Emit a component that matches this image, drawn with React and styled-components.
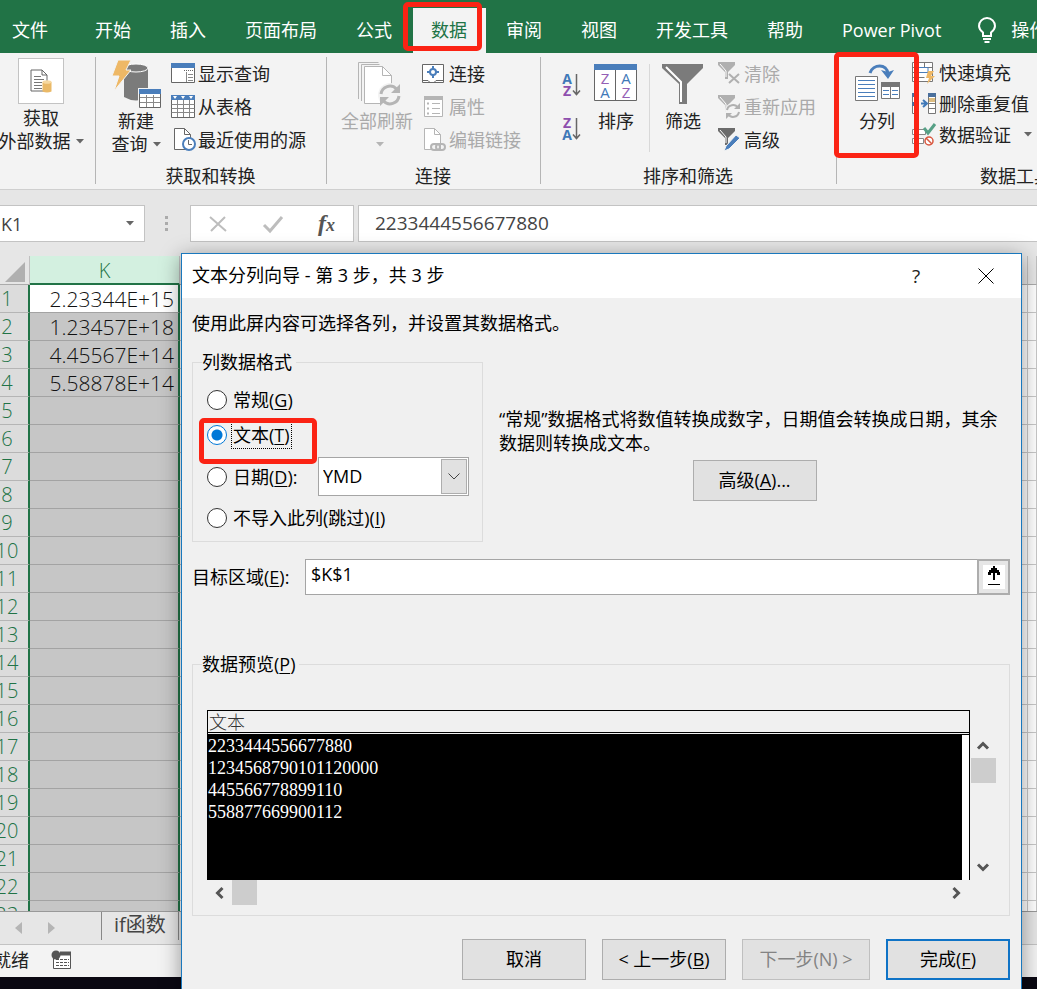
import { useState } from "react";
import styled, { createGlobalStyle } from "styled-components";

const tabs = ["开始", "插入", "页面布局", "公式", "数据", "审阅", "视图", "开发工具", "帮助", "Power Pivot"];

const cells = ["2.23344E+15", "1.23457E+18", "4.45567E+14", "5.58878E+14"];

const previewRows = [
  "2233444556677880",
  "1234568790101120000",
  "445566778899110",
  "558877669900112",
];

const rows = Array.from({ length: 23 }, (_, i) => i + 1);

export default function App() {
  return (
    <Window>
      <GlobalStyle />
      <TabBar />
      <Ribbon />
      <FormulaBar />
      <Sheet />
      <SheetTabs>
        <NavArrow viewBox="0 0 7 12">
          <path d="M7 0v12L0 6z" />
        </NavArrow>
        <NavArrow viewBox="0 0 7 12">
          <path d="M0 0v12l7-6z" />
        </NavArrow>
        <SheetTab>if函数</SheetTab>
      </SheetTabs>
      <StatusBar>
        <span>就绪</span>
        <svg width="21" height="20" viewBox="0 0 21 20">
          <path d="M2.500 7v11.500h17V2" fill="#fff" stroke="#555" />
          <path d="M9 1.500h11v4H9z" fill="#555" />
          <circle cx="5" cy="5" r="4.500" fill="#555" />
          <path d="M5 9.500h13M5 12.500h13M5 15.500h13" stroke="#555" strokeDasharray="3 1" />
        </svg>
      </StatusBar>
      <Taskbar />
      <Wizard />
    </Window>
  );
}

function TabBar() {
  return (
    <Tabs>
      <FileTab>文件</FileTab>
      {tabs.map((tab) => (
        <Tab key={tab} $active={tab === "数据"}>
          {tab}
          {tab === "数据" && <TabMark />}
        </Tab>
      ))}
      <TellMe>
        <svg width="20" height="26" viewBox="0 0 20 26" fill="none" stroke="#fff" strokeWidth="2">
          <path d="M6 19v-3.500C3.500 13.500 2 11.500 2 9a8 8 0 0 1 16 0c0 2.500-1.500 4.500-4 6.500V19z" />
          <path d="M6 22h8M7.500 25h5" />
        </svg>
        操作说明搜索
      </TellMe>
    </Tabs>
  );
}

function Ribbon() {
  return (
    <RibbonBar>
      <Group $width={96}>
        <GroupBody>
          <BigButton $width={82}>
            <Framed>
              <svg width="22" height="24" viewBox="0 0 22 24">
                <path d="M1 1h11l5 5v16H1z" fill="#fff" stroke="#666" />
                <path d="M12 1v5h5" fill="none" stroke="#666" />
                <path d="M4 7.500h7M4 10.500h10M4 13.500h8M4 16.500h8M4 19.500h8" stroke="#777" />
                <path d="M12.500 13h9v9.500q-4.500 2-9 0z" fill="#eab967" />
                <ellipse cx="17" cy="13" rx="4.500" ry="1.800" fill="#f6d8a0" />
              </svg>
            </Framed>
            <span>获取</span>
            <span>
              外部数据 <Caret />
            </span>
          </BigButton>
        </GroupBody>
        <GroupLabel />
      </Group>

      <Group $width={231}>
        <GroupBody $left={14}>
          <BigButton $width={52}>
            <NewQueryIcon />
            <span>新建</span>
            <span>
              查询 <Caret />
            </span>
          </BigButton>
          <SmallList $left={9}>
            <SmallButton>
              <svg viewBox="0 0 25 25">
                <path d="M.500 3.500h23v18H.500z" fill="#fff" stroke="#666" />
                <path d="M0 2h24v5H0z" fill="#4a7ebb" />
                <path d="M13 9.500h9" stroke="#666" strokeDasharray="1 1" />
                <path d="M15.500 11v10M17 13.500h5M17 16.500h5M17 19.500h5" stroke="#888" />
              </svg>
              显示查询
            </SmallButton>
            <SmallButton>
              <svg viewBox="0 0 25 25">
                <path d="M.500 2.500h23v21H.500z" fill="#fff" stroke="#666" />
                <path d="M.500 10.500h23M.500 14.500h23M.500 18.500h23M6.500 6v17M12.500 6v17M18.500 6v17" stroke="#888" />
                <path d="M0 1h24v5H0z" fill="#4a7ebb" />
                <path d="M2 2h4l-2 3zM10 2h4l-2 3zM18 2h4l-2 3z" fill="#fff" />
              </svg>
              从表格
            </SmallButton>
            <SmallButton>
              <svg viewBox="0 0 25 25">
                <path d="M3.500 1.500h10l6 6v15h-16z" fill="#fff" stroke="#666" />
                <path d="M13.500 1.500v6h6" fill="none" stroke="#666" />
                <circle cx="18" cy="17" r="6" fill="#fff" stroke="#4a7ebb" strokeWidth="2" />
                <path d="M17.500 13v4.500H21" fill="none" stroke="#666" />
              </svg>
              最近使用的源
            </SmallButton>
          </SmallList>
        </GroupBody>
        <GroupLabel>获取和转换</GroupLabel>
      </Group>

      <Group $width={214}>
        <GroupBody $left={13}>
          <BigButton $width={74} disabled>
            <svg width="44" height="46" viewBox="0 0 44 46" fill="none" stroke="#b5b5b5">
              <path d="M3.500 38V1.500h20M6.500 40V3.500h18" />
              <path d="M9.500 5.500h18l9 9v28h-27z" fill="#fff" />
              <path d="M27.500 5.500v9h9" />
              <circle cx="35" cy="34" r="12" fill="#f3f3f3" stroke="none" />
              <path d="M26 33a9 9 0 0 1 15.500-5M44 35a9 9 0 0 1-15.500 5" strokeWidth="3" />
              <path d="M45 23v9h-9zM25 45v-9h9z" fill="#b5b5b5" stroke="none" />
            </svg>
            <span>全部刷新</span>
            <span>
              <Caret />
            </span>
          </BigButton>
          <SmallList $left={8}>
            <SmallButton>
              <svg viewBox="0 0 25 25">
                <path d="M.500 3.500h21v18H.500z" fill="#fff" stroke="#666" />
                <path d="M1 19.500h5l2 2h4l2-2h7" fill="none" stroke="#666" />
                <circle cx="11" cy="11" r="3" fill="none" stroke="#4a7ebb" strokeWidth="2" />
                <path d="M11 5v3M11 14v3M5 11h3M14 11h3" stroke="#4a7ebb" strokeWidth="2" />
              </svg>
              连接
            </SmallButton>
            <SmallButton disabled>
              <svg viewBox="0 0 25 25">
                <path d="M2.500 2.500h18v20h-18z" fill="#fff" stroke="#b5b5b5" />
                <path d="M2 2h19v4H2z" fill="#b5b5b5" />
                <path d="M10 9.500h8M10 14.500h8M10 19.500h8" stroke="#b5b5b5" />
                <path d="M5 9.500h2M5 14.500h2M5 19.500h2" stroke="#b5b5b5" strokeWidth="2" />
              </svg>
              属性
            </SmallButton>
            <SmallButton disabled>
              <svg viewBox="0 0 25 25" fill="none" stroke="#b5b5b5">
                <path d="M2.500 1.500h10l6 6v15h-16z" fill="#fff" />
                <path d="M12.500 1.500v6h6" />
                <rect x="9" y="17" width="9" height="6" rx="3" fill="#f3f3f3" strokeWidth="2" />
                <rect x="14" y="17" width="9" height="6" rx="3" strokeWidth="2" />
              </svg>
              编辑链接
            </SmallButton>
          </SmallList>
        </GroupBody>
        <GroupLabel>连接</GroupLabel>
      </Group>

      <Group $width={296}>
        <GroupBody $left={20}>
          <SortColumn>
            <IconButton aria-label="升序">
              <SortIcon top="A" bottom="Z" />
            </IconButton>
            <IconButton aria-label="降序">
              <SortIcon top="Z" bottom="A" />
            </IconButton>
          </SortColumn>
          <BigButton $width={50}>
            <svg width="44" height="46" viewBox="0 0 44 46">
              <path d="M.500 4.500h42v35H.500z" fill="#fff" stroke="#666" />
              <path d="M21.500 7v32" stroke="#666" />
              <path d="M0 3h43v6H0z" fill="#4a7ebb" />
              <IconText x="11" y="23" fill="#9560b5">Z</IconText>
              <IconText x="11" y="37" fill="#3f78b8">A</IconText>
              <IconText x="32" y="23" fill="#3f78b8">A</IconText>
              <IconText x="32" y="37" fill="#9560b5">Z</IconText>
            </svg>
            <span>排序</span>
          </BigButton>
          <InnerLine />
          <BigButton $width={50}>
            <svg width="42" height="46" viewBox="0 0 42 46">
              <path d="M0 3h41v4L25 23v20h-8V23L0 7z" fill="#7b7b7b" />
              <path d="M4 6l15 15v20" fill="none" stroke="#fff" strokeWidth="2" />
            </svg>
            <span>筛选</span>
          </BigButton>
          <SmallList $left={9}>
            <SmallButton disabled>
              <svg viewBox="0 0 25 25">
                <Funnel color="#b0b0b0" />
                <path d="M12 13l10 9M22 13l-10 9" stroke="#b0b0b0" strokeWidth="2" />
              </svg>
              清除
            </SmallButton>
            <SmallButton disabled>
              <svg viewBox="0 0 25 25">
                <Funnel color="#b0b0b0" />
                <circle cx="16" cy="17" r="8" fill="#f3f3f3" />
                <path d="M10 16a6 6 0 0 1 11-2M22 18a6 6 0 0 1-11 2" fill="none" stroke="#b0b0b0" strokeWidth="2" />
                <path d="M23 9v6h-6zM9 25v-6h6z" fill="#b0b0b0" />
              </svg>
              重新应用
            </SmallButton>
            <SmallButton>
              <svg viewBox="0 0 25 25">
                <Funnel color="#6b6b6b" />
                <path d="M7 24l2-5L19 8l4 3-11 11z" fill="#4a7ebb" stroke="#f3f3f3" />
              </svg>
              高级
            </SmallButton>
          </SmallList>
        </GroupBody>
        <GroupLabel>排序和筛选</GroupLabel>
      </Group>

      <Group $width={360}>
        <GroupBody $left={15}>
          <BigButton $width={50}>
            <SplitIcon />
            <span>分列</span>
            <SplitMark />
          </BigButton>
          <SmallList $left={10} $compact>
            <SmallButton>
              <svg viewBox="0 0 25 25" fill="none">
                <path d="M.500 2.500h20v19H.500zM.500 7.500h20M.500 12.500h12M.500 17.500h12M12.500 3v4" fill="#fff" stroke="#777" />
                <path d="M6 7.500h10v5H6z" stroke="#4a7ebb" />
                <path d="M16 11h6l-3 5h4l-8 8 2-6h-3z" fill="#eeb866" />
              </svg>
              快速填充
            </SmallButton>
            <SmallButton>
              <svg viewBox="0 0 25 25">
                <path d="M.500 2.500h6v20h-6z" fill="#fff" stroke="#777" />
                <path d="M0 2h7v4H0zM0 11h7v4H0z" fill="#4a6f9c" />
                <path d="M9 12.500h5M11 9l4 3.500-4 3.500" fill="none" stroke="#3f78b8" strokeWidth="2" />
                <path d="M16.500 2.500h7v20h-7zM16.500 12.500h7M16.500 17.500h7" fill="#fff" stroke="#777" />
                <path d="M16 2h8v4h-8z" fill="#4a6f9c" />
                <path d="M17 7h6v4h-6z" fill="#dcbc80" />
              </svg>
              删除重复值
            </SmallButton>
            <SmallButton>
              <svg viewBox="0 0 25 25" fill="none">
                <path d="M.500 7.500h13v5H.500zM.500 16.500h11v5H.500z" fill="#fff" stroke="#888" />
                <path d="M12 6l4 5 7-9" stroke="#56a086" strokeWidth="3" />
                <circle cx="17" cy="19" r="4" fill="#fff" stroke="#d8573f" strokeWidth="1.500" />
                <path d="M14 16l6 6" stroke="#d8573f" strokeWidth="1.500" />
              </svg>
              数据验证 <Caret $far />
            </SmallButton>
          </SmallList>
        </GroupBody>
        <GroupLabel>数据工具</GroupLabel>
      </Group>
    </RibbonBar>
  );
}

function Caret({ $far }) {
  return (
    <CaretIcon $far={$far} width="8" height="5" viewBox="0 0 8 5">
      <path d="M0 0h8L4 4.500z" />
    </CaretIcon>
  );
}

function Funnel({ color }) {
  return (
    <>
      <path d="M1 1h17v3l-7 7v7H8v-7L1 4z" fill={color} />
      <path d="M3 3l6 7v6" fill="none" stroke="#fff" />
    </>
  );
}

function SortIcon({ top, bottom }) {
  const color = { A: "#3f78b8", Z: "#8e4fae" };
  return (
    <svg width="20" height="26" viewBox="0 0 20 26">
      <SortText x="6" y="12" fill={color[top]}>{top}</SortText>
      <SortText x="6" y="24" fill={color[bottom]}>{bottom}</SortText>
      <path d="M15.500 2v20M12 18.500l3.500 4 3.500-4" fill="none" stroke="#666" strokeWidth="1.500" />
    </svg>
  );
}

function NewQueryIcon() {
  return (
    <svg width="49" height="50" viewBox="0 0 49 50">
      <path d="M12 9v29q12 7 24 0V9z" fill="#7b7b7b" />
      <ellipse cx="24" cy="9" rx="12" ry="4" fill="#7b7b7b" stroke="#fff" />
      <path d="M6 1h13l-5 10h5L2 32l5-15H0z" fill="#eeb866" stroke="#f3f3f3" />
      <path d="M26 29h24v21H26z" fill="#f3f3f3" />
      <path d="M27.500 30.500h21v18h-21z" fill="#fff" stroke="#666" />
      <path d="M28 38.500h20M28 43.500h20M34.500 36v12M41.500 36v12" stroke="#888" />
      <path d="M27 30h22v5H27z" fill="#4a7ebb" />
    </svg>
  );
}

function SplitIcon() {
  return (
    <svg width="46" height="46" viewBox="0 0 46 46">
      <path d="M1.500 15.500h22v24h-22z" fill="#fff" stroke="#777" />
      <path d="M4 19.500h17M4 23.500h17M4 27.500h17M4 31.500h17M4 35.500h17" stroke="#4a7ebb" />
      <path d="M16 12c3-9 17-10 18 1" fill="none" stroke="#4a7ebb" strokeWidth="3" />
      <path d="M27 9l7 9 6-9-6 2z" fill="#4a7ebb" />
      <path d="M27.500 21.500h18v16h-18z" fill="#fff" stroke="#777" />
      <path d="M27 21h19v5H27z" fill="#777" />
      <path d="M36.500 26v11" stroke="#777" />
      <path d="M29 29.500h6M38 29.500h6M29 33.500h6M38 33.500h6" stroke="#4a7ebb" />
    </svg>
  );
}

function FormulaBar() {
  return (
    <FormulaRow>
      <NameBox>
        <input aria-label="名称框" defaultValue="K1" />
        <Caret />
      </NameBox>
      <Grip viewBox="0 0 5 16">
        <path d="M0 0h3v3H0zM0 6h3v3H0zM0 12h3v3H0z" />
      </Grip>
      <FormulaTools>
        <IconButton aria-label="取消">
          <svg width="18" height="18" viewBox="0 0 18 18">
            <path d="M1 2l16 14M16 2L2 16" stroke="#bdbdbd" strokeWidth="2" />
          </svg>
        </IconButton>
        <IconButton aria-label="输入">
          <svg width="20" height="18" viewBox="0 0 20 18">
            <path d="M1 10l6 6L19 2" fill="none" stroke="#bdbdbd" strokeWidth="3" />
          </svg>
        </IconButton>
        <FxButton>
          f<small>x</small>
        </FxButton>
      </FormulaTools>
      <FormulaInput aria-label="编辑栏" defaultValue="2233444556677880" />
    </FormulaRow>
  );
}

function Sheet() {
  return (
    <Grid>
      <GridTable>
        <colgroup>
          <col width="44" />
          <col width="150" />
          <col />
          <col width="9" />
        </colgroup>
        <thead>
          <tr>
            <Corner>
              <svg width="20" height="20" viewBox="0 0 20 20">
                <path d="M20 0v20H0z" fill="#b0b0b0" />
              </svg>
            </Corner>
            <ColHead $selected>K</ColHead>
            <ColHead />
            <ColHead />
          </tr>
        </thead>
        <tbody>
          {rows.map((n) => (
            <tr key={n}>
              <RowHead>{n}</RowHead>
              <SelectedCell $first={n === 1}>{cells[n - 1]}</SelectedCell>
              <Cell />
              <Cell />
            </tr>
          ))}
        </tbody>
      </GridTable>
    </Grid>
  );
}

function Wizard() {
  const [format, setFormat] = useState("text");
  const radio = (value) => ({
    type: "radio",
    name: "format",
    checked: format === value,
    onChange: () => setFormat(value),
  });

  return (
    <Dialog role="dialog" aria-labelledby="wizard-title">
      <TitleBar>
        <Title id="wizard-title">文本分列向导 - 第 3 步，共 3 步</Title>
        <TitleButton aria-label="帮助">?</TitleButton>
        <TitleButton aria-label="关闭">
          <svg width="16" height="16" viewBox="0 0 16 16">
            <path d="M.500.500l15 15M15.500.500l-15 15" stroke="#000" />
          </svg>
        </TitleButton>
      </TitleBar>
      <DialogBody>
        <Intro>使用此屏内容可选择各列，并设置其数据格式。</Intro>

        <FormatRow>
          <FormatBox>
            <legend>列数据格式</legend>
            <Choices>
              <Choice>
                <input {...radio("general")} />
                <span>
                  常规(<u>G</u>)
                </span>
              </Choice>
              <Choice>
                <input {...radio("text")} />
                <FocusText>
                  文本(<u>T</u>)
                </FocusText>
                <ChoiceMark />
              </Choice>
              <DateRow>
                <Choice>
                  <input {...radio("date")} />
                  <span>
                    日期(<u>D</u>):
                  </span>
                </Choice>
                <SelectBox>
                  <select aria-label="日期格式" defaultValue="YMD">
                    <option>YMD</option>
                    <option>MDY</option>
                    <option>DMY</option>
                  </select>
                  <SelectArrow>
                    <svg width="12" height="7" viewBox="0 0 12 7">
                      <path d="M.500.500L6 6 11.500.500" fill="none" stroke="#444" />
                    </svg>
                  </SelectArrow>
                </SelectBox>
              </DateRow>
              <Choice>
                <input {...radio("skip")} />
                <span>
                  不导入此列(跳过)(<u>I</u>)
                </span>
              </Choice>
            </Choices>
          </FormatBox>
          <Hint>
            <p>“常规”数据格式将数值转换成数字，日期值会转换成日期，其余数据则转换成文本。</p>
            <Button>
              高级(<u>A</u>)...
            </Button>
          </Hint>
        </FormatRow>

        <TargetRow>
          <label htmlFor="target">
            目标区域(<u>E</u>):
          </label>
          <TargetInput id="target" defaultValue="$K$1" />
          <PickButton aria-label="选择区域">
            <svg width="22" height="24" viewBox="0 0 22 24">
              <path d="M0 0h22v24H0z" fill="#fff" />
              <path d="M10 1h2v2h2v2h2v2h1v3h-3V8h-2v7h-2V8H8v2H5V7h1V5h2V3h2zM5 19h12v1H5z" />
            </svg>
          </PickButton>
        </TargetRow>

        <PreviewBox>
          <legend>
            数据预览(<u>P</u>)
          </legend>
          <PreviewArea>
            <Preview>
              <PreviewTable>
                <thead>
                  <tr>
                    <th>文本</th>
                  </tr>
                </thead>
                <tbody>
                  {previewRows.map((row) => (
                    <tr key={row}>
                      <td>{row}</td>
                    </tr>
                  ))}
                </tbody>
              </PreviewTable>
              <PreviewRest />
            </Preview>
            <VerticalBar>
              <Chevron viewBox="0 0 12 12">
                <path d="M1 8.500L6 3.500l5 5" />
              </Chevron>
              <Thumb />
              <Spacer />
              <Chevron viewBox="0 0 12 12">
                <path d="M1 3.500l5 5 5-5" />
              </Chevron>
            </VerticalBar>
            <HorizontalBar>
              <Chevron viewBox="0 0 12 12">
                <path d="M8.500 1L3.500 6l5 5" />
              </Chevron>
              <Thumb />
              <Spacer />
              <Chevron viewBox="0 0 12 12">
                <path d="M3.500 1l5 5-5 5" />
              </Chevron>
            </HorizontalBar>
          </PreviewArea>
        </PreviewBox>

        <Actions>
          <Button>取消</Button>
          <Button>
            &lt; 上一步(<u>B</u>)
          </Button>
          <Button disabled $wide>
            下一步(N) &gt;
          </Button>
          <Button $primary>
            完成(<u>F</u>)
          </Button>
        </Actions>
      </DialogBody>
    </Dialog>
  );
}

const GlobalStyle = createGlobalStyle`
  * {
    box-sizing: border-box;
  }

  body {
    margin: 0;
  }

  body, button, input, select {
    font-family: "Open Sans", "Noto Sans CJK SC", sans-serif;
    font-size: 18px;
    line-height: 24px;
    color: #222;
  }

  button {
    border: none;
    padding: 0;
    background: none;
    white-space: nowrap;
  }

  svg {
    display: block;
    flex-shrink: 0;
    overflow: visible;
  }

  u {
    text-decoration-thickness: 1px;
    text-underline-offset: 2px;
  }
`;

const Window = styled.div`
  position: relative;
  display: flex;
  flex-direction: column;
  height: 100vh;
  overflow: hidden;
  background-color: #e6e6e6;
`;

const Mark = styled.span`
  position: absolute;
  border: 5px solid #fb2314;
  border-radius: 5px;
  pointer-events: none;
  z-index: 1;
`;

const TabMark = styled(Mark)`
  inset: -6px 4px 2px -10px;
`;

const SplitMark = styled(Mark)`
  inset: -6px -17px 0 -18px;
`;

const ChoiceMark = styled(Mark)`
  inset: -4px -27px -16px -8px;
`;

const Tabs = styled.nav`
  display: flex;
  flex-shrink: 0;
  padding-top: 8px;
  background-color: #217346;
`;

const Tab = styled.button`
  position: relative;
  flex-shrink: 0;
  height: 45px;
  padding: 0 19px 2px 18px;
  margin-right: 2px;
  color: ${(props) => (props.$active ? "#217346" : "#fff")};
  background-color: ${(props) => (props.$active ? "#f3f3f3" : "transparent")};
`;

const FileTab = styled(Tab)`
  padding: 0 17px 2px 12px;
  margin-right: 12px;
`;

const TellMe = styled(Tab)`
  display: flex;
  align-items: center;
  gap: 14px;
  padding: 0 0 2px;
  margin-left: 15px;
`;

const RibbonBar = styled.div`
  display: flex;
  flex-shrink: 0;
  height: 137px;
  background-color: #f3f3f3;
  border-bottom: 1px solid #cfcfcf;
`;

const Group = styled.section`
  position: relative;
  display: flex;
  flex-direction: column;
  flex: 0 0 ${(props) => props.$width}px;

  &:not(:last-child)::after {
    content: "";
    position: absolute;
    inset: 4px 0 5px auto;
    width: 1px;
    background-color: #b5b5b5;
  }
`;

const GroupBody = styled.div`
  display: flex;
  align-items: flex-start;
  height: 111px;
  padding: 5px 0 0 ${(props) => props.$left || 0}px;
`;

const GroupLabel = styled.div`
  padding-right: 2px;
  text-align: center;
`;

const BigButton = styled.button`
  position: relative;
  display: flex;
  flex-direction: column;
  align-items: center;
  width: ${(props) => props.$width}px;
  height: 100px;
  line-height: 23px;

  > svg {
    height: 52px;
  }

  &:disabled {
    color: #aaa;
  }

  span {
    display: flex;
    align-items: center;
    min-height: 23px;
  }
`;

const Framed = styled.div`
  display: flex;
  align-items: center;
  justify-content: center;
  width: 46px;
  height: 46px;
  margin-bottom: 3px;
  background-color: #fff;
  border: 1px solid #c3c3c3;
`;

const CaretIcon = styled.svg`
  margin-left: ${(props) => (props.$far ? 11 : 5)}px;
  fill: #666;

  button:disabled & {
    fill: #b5b5b5;
  }
`;

const SmallList = styled.div`
  display: grid;
  grid-auto-rows: ${(props) => (props.$compact ? 31 : 33)}px;
  margin-left: ${(props) => props.$left}px;
`;

const SmallButton = styled.button`
  display: flex;
  align-items: center;
  gap: 2px;
  padding-bottom: 2px;

  > svg:first-child {
    width: 25px;
    height: 25px;
  }

  &:disabled {
    color: #aaa;
  }
`;

const SortColumn = styled.div`
  display: grid;
  gap: 18px;
  width: 22px;
  padding-top: 14px;
  margin-right: 8px;
`;

const IconButton = styled.button`
  display: block;
`;

const SortText = styled.text`
  font: bold 14px "Open Sans", sans-serif;
  text-anchor: middle;
`;

const IconText = styled.text`
  font: 15px "Open Sans", sans-serif;
  text-anchor: middle;
`;

const InnerLine = styled.div`
  width: 1px;
  height: 88px;
  margin: 6px 8px 0;
  background-color: #d8d8d8;
`;

const FormulaRow = styled.div`
  display: flex;
  flex-shrink: 0;
  align-items: stretch;
  height: 66px;
  padding: 15px 0 14px;
`;

const NameBox = styled.div`
  display: flex;
  align-items: center;
  width: 145px;
  padding-right: 10px;
  background-color: #fff;
  border: 1px solid #c3c3c3;
  border-left: none;

  input {
    flex: 1;
    min-width: 0;
    padding: 0 0 0 1px;
    border: none;
    outline: none;
    background: none;
    color: #444;
  }
`;

const Grip = styled.svg`
  width: 5px;
  height: 16px;
  margin: auto 20px;
  fill: #ababab;
`;

const FormulaTools = styled.div`
  display: flex;
  align-items: center;
  justify-content: space-between;
  width: 164px;
  padding: 0 18px;
  margin-right: 4px;
  background-color: #fff;
  border: 1px solid #c3c3c3;
`;

const FxButton = styled.button`
  font-family: "Liberation Serif", serif;
  font-style: italic;
  font-weight: bold;
  font-size: 24px;
  color: #555;

  small {
    font-size: 18px;
  }
`;

const FormulaInput = styled.input`
  flex: 1;
  min-width: 0;
  padding: 0 16px 2px;
  border: 1px solid #c3c3c3;
  border-right: none;
  outline: none;
  font-size: 19px;
  color: #444;
`;

const Grid = styled.div`
  flex: 1;
  min-height: 0;
  overflow: hidden;
  background-color: #fff;
`;

const GridTable = styled.table`
  width: calc(100% + 14px);
  margin-left: -14px;
  table-layout: fixed;
  border-collapse: separate;
  border-spacing: 0;
  font-size: 20px;
  line-height: 26px;

  th, td {
    height: 28px;
    padding: 1px 0 0;
    font-weight: 300;
  }

  thead th {
    height: 29px;
    padding-top: 3px;
    line-height: 24px;
  }
`;

const Corner = styled.td`
  background-color: #e6e6e6;
  border-bottom: 1px solid #ababab;
  border-right: 1px solid #c0c0c0;

  svg {
    margin: 4px 4px 2px auto;
  }
`;

const ColHead = styled.th`
  color: #217346;
  background-color: ${(props) => (props.$selected ? "#d3f0e0" : "#e6e6e6")};
  border-bottom: ${(props) => (props.$selected ? "2px solid #217346" : "1px solid #ababab")};
  border-right: 1px solid #c0c0c0;
`;

const RowHead = styled.th`
  color: #217346;
  background-color: #dcdcdc;
  border-bottom: 1px solid #b5b5b5;
  border-right: 2px solid #217346;
`;

const SelectedCell = styled.td`
  text-align: right;
  font-size: 21px;
  color: #111;
  background-color: ${(props) => (props.$first ? "#fff" : "#c6c6c6")};
  border-bottom: 1px solid #a3a3a3;
  border-right: 2px solid #217346;

  ${GridTable} & {
    padding-right: 4px;
  }
`;

const Cell = styled.td`
  border-bottom: 1px solid #c8c8c8;
  border-right: 1px solid #c8c8c8;
`;

const SheetTabs = styled.div`
  display: flex;
  flex-shrink: 0;
  align-items: center;
  height: 34px;
  padding-left: 15px;
  border-top: 1px solid #999;
  border-bottom: 1px solid #c3c3c3;
`;

const NavArrow = styled.svg`
  width: 7px;
  height: 12px;
  margin-right: 26px;
  fill: #b5b5b5;
`;

const SheetTab = styled.button`
  align-self: flex-start;
  height: 28px;
  margin-left: 20px;
  padding: 0 12px 2px;
  border-left: 1px solid #888;
  border-right: 1px solid #888;
  font-size: 20px;
  color: #444;
`;

const StatusBar = styled.div`
  display: flex;
  flex-shrink: 0;
  align-items: center;
  gap: 22px;
  height: 32px;
  padding-bottom: 2px;
  background-color: #f3f3f3;

  span {
    margin-left: -7px;
  }
`;

const Taskbar = styled.div`
  flex-shrink: 0;
  height: 12px;
  background-color: #0a0812;
`;

const Dialog = styled.div`
  position: absolute;
  top: 253px;
  left: 181px;
  right: 15px;
  color: #000;
  background-color: #f0f0f0;
  border: 1px solid #1a78bd;
  box-shadow: 0 4px 20px rgba(0, 0, 0, 0.4);
`;

const TitleBar = styled.div`
  display: flex;
  height: 44px;
  padding-left: 10px;
  background-color: #fff;
`;

const Title = styled.div`
  flex: 1;
  line-height: 42px;
`;

const TitleButton = styled.button`
  display: flex;
  align-items: center;
  justify-content: center;
  width: 70px;
  font-size: 19px;
`;

const DialogBody = styled.form.attrs({ onSubmit: (e) => e.preventDefault() })`
  padding: 13px 11px 24px 10px;

  legend {
    padding: 0 4px 0 0;
    margin-left: 9px;
  }
`;

const Intro = styled.div`
  margin-bottom: 15px;
`;

const FormatRow = styled.div`
  display: flex;
  gap: 16px;
`;

const FormatBox = styled.fieldset`
  width: 291px;
  margin: 0;
  padding: 0;
  border: 1px solid #dcdcdc;
`;

const Choices = styled.div`
  display: grid;
  gap: 9px;
  justify-items: start;
  padding: 13px 13px 10px 14px;
`;

const Choice = styled.label`
  position: relative;
  display: flex;
  align-items: center;
  gap: 6px;
  height: 26px;

  input {
    appearance: none;
    width: 20px;
    height: 20px;
    margin: 0;
    border: 1px solid #333;
    border-radius: 50%;
    background-color: #fff;
  }

  input:checked {
    border-color: #0078d7;
    background-image: radial-gradient(circle, #0078d7 5px, transparent 6px);
  }
`;

const FocusText = styled.span`
  outline: 1px dotted #000;
  outline-offset: 1px;
`;

const DateRow = styled.div`
  display: flex;
  align-items: center;
  justify-content: space-between;
  justify-self: stretch;
  height: 39px;
`;

const SelectBox = styled.div`
  position: relative;
  width: 151px;
  height: 39px;

  select {
    appearance: none;
    width: 100%;
    height: 100%;
    padding: 0 28px 2px 4px;
    border: 1px solid #a5a5a5;
    border-radius: 0;
    background-color: #fff;
    color: #000;
  }
`;

const SelectArrow = styled.span`
  position: absolute;
  inset: 2px 2px 2px auto;
  display: flex;
  align-items: center;
  justify-content: center;
  width: 26px;
  background-color: #e1e1e1;
  border: 1px solid #adadad;
  pointer-events: none;
`;

const Hint = styled.div`
  flex: 1;
  display: flex;
  flex-direction: column;
  align-items: center;
  padding-top: 57px;

  p {
    margin: 0 0 5px;
  }
`;

const Button = styled.button`
  width: ${(props) => (props.$wide ? 128 : 124)}px;
  height: 41px;
  padding-bottom: 2px;
  color: #000;
  background-color: #e1e1e1;
  border: ${(props) => (props.$primary ? "2px solid #0f73c6" : "1px solid #adadad")};

  &:disabled {
    color: #838383;
    border-color: #bfbfbf;
  }
`;

const TargetRow = styled.div`
  display: flex;
  align-items: center;
  margin: 17px 0 57px;

  label {
    width: 113px;
  }
`;

const TargetInput = styled.input`
  flex: 1;
  min-width: 0;
  height: 36px;
  padding: 0 5px 6px;
  border: 1px solid #a5a5a5;
  outline: none;
  color: #000;
`;

const PickButton = styled.button`
  display: flex;
  align-items: center;
  justify-content: center;
  width: 33px;
  height: 36px;
  margin-left: -1px;
  background-color: #e6e6e6;
  border: 2px solid #adadad;
`;

const PreviewBox = styled.fieldset`
  min-width: 0;
  margin: 0 0 23px;
  padding: 0;
  border: 1px solid #dcdcdc;
`;

const PreviewArea = styled.div`
  display: grid;
  grid-template-columns: 1fr 25px;
  grid-template-rows: 170px 25px;
  padding: 34px 14px 10px;
`;

const Preview = styled.div`
  display: flex;
  flex-direction: column;
  border: 1px solid #000;
  border-bottom: none;
  background-color: #fff;
`;

const PreviewTable = styled.table`
  width: 100%;
  border-collapse: separate;
  border-spacing: 0;
  font-family: "Liberation Serif", "Noto Sans CJK SC", serif;
  line-height: 22px;

  th {
    padding: 3px 1px 0;
    font-weight: 300;
    line-height: 18px;
    text-align: left;
    background-color: #f0f0f0;
    border-bottom: 3px double #000;
    color: #333;
  }

  td {
    padding: 0;
    color: #fff;
    background-color: #000;
    border-right: 7px solid #fff;
  }
`;

const PreviewRest = styled.div`
  flex: 1;
  margin-right: 7px;
  background-color: #000;
`;

const VerticalBar = styled.div`
  display: flex;
  flex-direction: column;
  align-items: center;
  padding: 30px 0 7px 1px;
`;

const HorizontalBar = styled.div`
  display: flex;
  align-items: center;
  padding: 0 8px 0 7px;
`;

const Chevron = styled.svg`
  width: 12px;
  height: 12px;
  fill: none;
  stroke: #555;
  stroke-width: 3;
`;

const Thumb = styled.div`
  width: 25px;
  height: 25px;
  margin: 6px;
  background-color: #cdcdcd;
`;

const Spacer = styled.div`
  flex: 1;
`;

const Actions = styled.div`
  display: flex;
  justify-content: flex-end;
  gap: 16px;
`;
